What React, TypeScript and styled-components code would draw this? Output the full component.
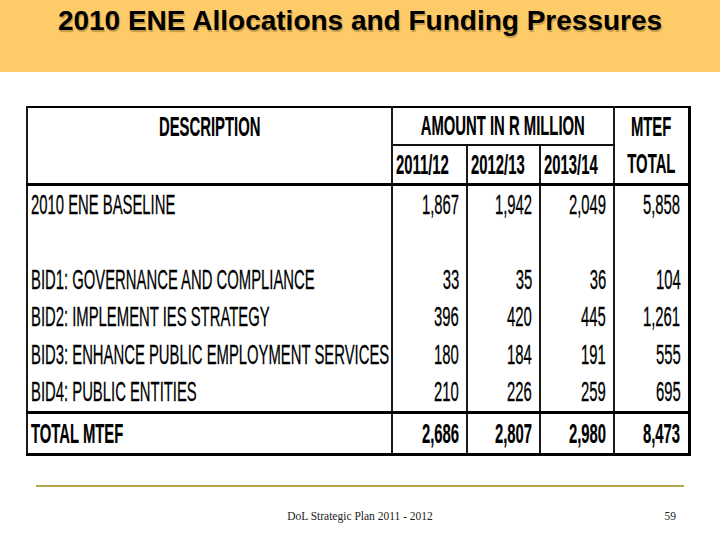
import React from "react";
import styled, { createGlobalStyle } from "styled-components";

const Global = createGlobalStyle`
  html, body { margin: 0; padding: 0; background: #ffffff; }
  body { width: 720px; height: 540px; overflow: hidden; font-family: "Liberation Sans", Arial, sans-serif; }
`;

const Slide = styled.div`
  width: 720px;
  height: 540px;
  display: flex;
  flex-direction: column;
  background: #ffffff;
`;

const TitleBand = styled.header`
  height: 72px;
  flex: none;
  background: #fecb69;
  display: flex;
  justify-content: center;
  align-items: flex-start;
  padding-top: 5px;
  box-sizing: border-box;
`;

const Title = styled.h1`
  margin: 0;
  font-family: "Liberation Sans", Arial, sans-serif;
  font-weight: 700;
  font-size: 28px;
  line-height: 32px;
  color: #000;
  text-shadow: 1px 2px 1px rgba(90, 60, 10, 0.35);
`;

const Main = styled.main`
  padding: 34px 0 0 26px;
  height: 378px;
  flex: none;
  box-sizing: border-box;
`;

const Table = styled.table`
  border-collapse: collapse;
  table-layout: fixed;
  width: 662px;
  border-left: 2px solid #555;
  border-top: 2px solid #000;
  border-right: 3px solid #000;
  border-bottom: 3px solid #000;
`;

type Align = "left" | "right" | "center";

const Cell = styled.td<{
  $top?: string;
  $bottom?: string;
  $h: number;
}>`
  height: ${(p) => p.$h}px;
  padding: 0;
  border-left: 2px solid #1a1a1a;
  border-right: 2px solid #1a1a1a;
  border-top: ${(p) => p.$top ?? "none"};
  border-bottom: ${(p) => p.$bottom ?? "none"};
  vertical-align: middle;
  overflow: visible;
`;

const Inner = styled.div<{ $align: Align; $pad: number }>`
  display: flex;
  justify-content: ${(p) =>
    p.$align === "left" ? "flex-start" : p.$align === "right" ? "flex-end" : "center"};
  padding: ${(p) => (p.$align === "left" ? `0 0 0 ${p.$pad}px` : p.$align === "right" ? `0 ${p.$pad}px 0 0` : "0")};
  white-space: nowrap;
`;

const Label = styled.span<{ $align: Align; $bold?: boolean }>`
  display: inline-block;
  flex: none;
  font-family: "Liberation Sans", Arial, sans-serif;
  font-size: 28px;
  line-height: 26px;
  font-weight: ${(p) => (p.$bold ? 700 : 400)};
  color: #000;
  -webkit-text-stroke: ${(p) => (p.$bold ? "0.2px" : "0.3px")} #000;
  transform: scaleX(0.53);
  transform-origin: ${(p) => p.$align} center;
`;

const Footer = styled.footer`
  display: flex;
  flex-direction: column;
  padding: 0 36px;
`;

const Rule = styled.div`
  height: 2px;
  width: 648px;
  background: #b5a44c;
  margin-top: 35px;
`;

const FooterRow = styled.div`
  display: grid;
  grid-template-columns: 1fr auto 1fr;
  align-items: center;
  margin-top: 23px;
  font-family: "Liberation Serif", "Times New Roman", serif;
  font-size: 11.5px;
  color: #222;
`;

const FooterCenter = styled.span`
  grid-column: 2;
`;

const PageNo = styled.span`
  grid-column: 3;
  justify-self: end;
  padding-right: 8px;
`;

const T = ({
  children,
  align = "left",
  bold,
  pad = 3,
}: {
  children?: React.ReactNode;
  align?: Align;
  bold?: boolean;
  pad?: number;
}) => (
  <Inner $align={align} $pad={pad}>
    <Label $align={align} $bold={bold}>
      {children}
    </Label>
  </Inner>
);

const THICK = "3px solid #000";
const THIN = "2px solid #111";

const rows: { label: string; vals: string[] }[] = [
  { label: "2010 ENE BASELINE", vals: ["1,867", "1,942", "2,049", "5,858"] },
  { label: "", vals: ["", "", "", ""] },
  { label: "BID1: GOVERNANCE AND COMPLIANCE", vals: ["33", "35", "36", "104"] },
  { label: "BID2: IMPLEMENT IES STRATEGY", vals: ["396", "420", "445", "1,261"] },
  { label: "BID3: ENHANCE PUBLIC EMPLOYMENT SERVICES", vals: ["180", "184", "191", "555"] },
  { label: "BID4: PUBLIC ENTITIES", vals: ["210", "226", "259", "695"] },
];

export default function App() {
  return (
    <Slide>
      <Global />
      <TitleBand>
        <Title>2010 ENE Allocations and Funding Pressures</Title>
      </TitleBand>
      <Main>
        <Table>
          <colgroup>
            <col style={{ width: 365 }} />
            <col style={{ width: 75 }} />
            <col style={{ width: 73 }} />
            <col style={{ width: 74 }} />
            <col style={{ width: 75 }} />
          </colgroup>
          <thead>
            <tr>
              <Cell $h={36}>
                <T align="center" bold>DESCRIPTION</T>
              </Cell>
              <Cell $h={36} colSpan={3} $bottom={THIN}>
                <T align="center" bold>AMOUNT IN R MILLION</T>
              </Cell>
              <Cell $h={36}>
                <T align="center" bold>MTEF</T>
              </Cell>
            </tr>
            <tr>
              <Cell $h={37} $bottom={THICK} />
              <Cell $h={37} $top={THIN} $bottom={THICK}>
                <T bold>2011/12</T>
              </Cell>
              <Cell $h={37} $top={THIN} $bottom={THICK}>
                <T bold>2012/13</T>
              </Cell>
              <Cell $h={37} $top={THIN} $bottom={THICK}>
                <T bold>2013/14</T>
              </Cell>
              <Cell $h={37} $bottom={THICK}>
                <T align="center" bold>TOTAL</T>
              </Cell>
            </tr>
          </thead>
          <tbody>
            {rows.map((r, i) => (
              <tr key={i}>
                <Cell $h={37.5}>
                  <T>{r.label}</T>
                </Cell>
                {r.vals.map((v, j) => (
                  <Cell $h={37.5} key={j}>
                    <T align="right" pad={7}>{v}</T>
                  </Cell>
                ))}
              </tr>
            ))}
            <tr>
              <Cell $h={39} $top={THICK}>
                <T bold>TOTAL MTEF</T>
              </Cell>
              {["2,686", "2,807", "2,980", "8,473"].map((v) => (
                <Cell $h={39} $top={THICK} key={v}>
                  <T align="right" bold pad={7}>{v}</T>
                </Cell>
              ))}
            </tr>
          </tbody>
        </Table>
      </Main>
      <Footer>
        <Rule />
        <FooterRow>
          <FooterCenter>DoL Strategic Plan 2011 - 2012</FooterCenter>
          <PageNo>59</PageNo>
        </FooterRow>
      </Footer>
    </Slide>
  );
}
